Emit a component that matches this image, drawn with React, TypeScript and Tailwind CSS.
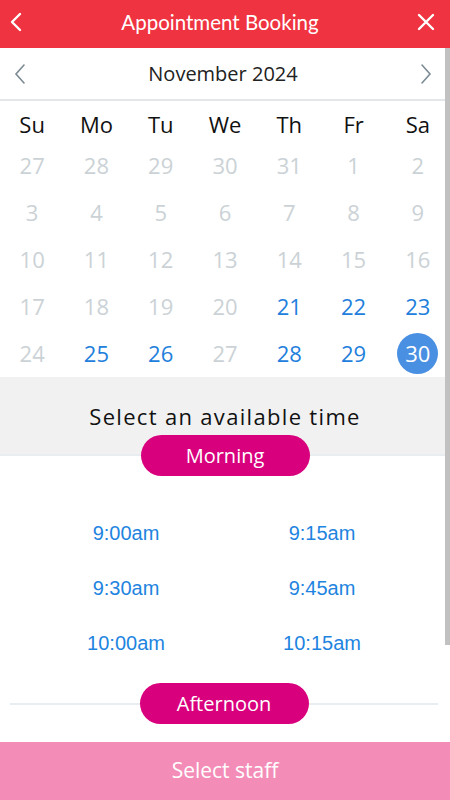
import React from 'react';

const weeks = [
  [27, 28, 29, 30, 31, 1, 2],
  [3, 4, 5, 6, 7, 8, 9],
  [10, 11, 12, 13, 14, 15, 16],
  [17, 18, 19, 20, 21, 22, 23],
  [24, 25, 26, 27, 28, 29, 30],
];

// which cells (week index, day index) are bookable
const available = new Set(['3-4', '3-5', '3-6', '4-1', '4-2', '4-4', '4-5', '4-6']);
const selected = '4-6';

const morning = ['9:00am', '9:15am', '9:30am', '9:45am', '10:00am', '10:15am'];

const Pill = ({ label }: { label: string }) => (
  <div className="w-[169px] h-[41px] rounded-full bg-[#d9007e] text-white text-[20px] flex items-center justify-center relative z-10">
    {label}
  </div>
);

const TimeGrid = ({ slots }: { slots: string[] }) => (
  <div className="grid grid-cols-2 pl-[28px] pr-[30px]">
    {slots.map(t => (
      <div
        key={t}
        className="h-[55px] flex items-center justify-center text-[20px] text-[#1e84e0]"
        style={{ fontFamily: '"Liberation Sans", Arial, sans-serif' }}
      >
        {t}
      </div>
    ))}
  </div>
);

export default function App() {
  return (
    <div className="w-[450px] h-[800px] flex flex-col bg-white" style={{ fontFamily: '"Open Sans", "Noto Sans", sans-serif' }}>
      {/* Header */}
      <div className="h-[48px] shrink-0 bg-[#ef3340] flex items-center justify-between px-[10px] text-white">
        <svg width="14" height="20" viewBox="0 0 14 20" fill="none" stroke="white" strokeWidth="2.4" strokeLinecap="round" strokeLinejoin="round" className="-mt-[4px]">
          <path d="M10 2 L2 10 L10 18" />
        </svg>
        <div className="text-[20.5px] pb-[3px]" style={{ fontFamily: 'Lato, "Open Sans", sans-serif' }}>Appointment Booking</div>
        <svg width="20" height="20" viewBox="0 0 20 20" fill="none" stroke="white" strokeWidth="2.4" strokeLinecap="round" className="mr-[4px] -mt-[4px]">
          <path d="M3 3 L17 17 M17 3 L3 17" />
        </svg>
      </div>

      {/* Scroll area */}
      <div className="flex-1 relative overflow-hidden">
        <div className="h-[53px] flex items-center justify-between px-[14px] border-b-2 border-[#e3e7ea]">
          <svg width="12" height="22" viewBox="0 0 12 22" fill="none" stroke="#7b8a93" strokeWidth="1.6" strokeLinecap="round">
            <path d="M10 2 L2 11 L10 20" />
          </svg>
          <div className="text-[20px] text-[#222]">November 2024</div>
          <svg width="12" height="22" viewBox="0 0 12 22" fill="none" stroke="#7b8a93" strokeWidth="1.6" strokeLinecap="round" className="mr-[4px]">
            <path d="M2 2 L10 11 L2 20" />
          </svg>
        </div>

        <div className="grid grid-cols-7 h-[41px] pt-[5px] text-[22px] text-[#111]">
          {['Su', 'Mo', 'Tu', 'We', 'Th', 'Fr', 'Sa'].map(d => (
            <div key={d} className="flex items-center justify-center">{d}</div>
          ))}
        </div>

        {weeks.map((week, wi) => (
          <div key={wi} className="grid grid-cols-7 h-[47px]">
            {week.map((day, di) => {
              const key = `${wi}-${di}`;
              const isSel = key === selected;
              const isAvail = available.has(key);
              return (
                <div key={key} className="flex items-center justify-center">
                  <div
                    className={`w-[41px] h-[41px] rounded-full flex items-center justify-center text-[22px] ${
                      isSel ? 'bg-[#4a90e2] text-white' : isAvail ? 'text-[#1e80dc]' : 'text-[#cbd2d6]'
                    }`}
                  >
                    {day}
                  </div>
                </div>
              );
            })}
          </div>
        ))}

        <div className="h-[79px] bg-[#f1f1f1] border-b-2 border-[#e9edf0] pt-[23px] text-center text-[22px] tracking-[0.06em] text-[#111]">
          Select an available time
        </div>
        <div className="flex justify-center -mt-[21px]">
          <Pill label="Morning" />
        </div>

        <div className="pt-[29px]">
          <TimeGrid slots={morning} />
        </div>

        <div className="flex items-center pl-[10px] pr-[12px] mt-[13px]">
          <div className="flex-1 h-[2px] bg-[#e9edf0]" />
          <Pill label="Afternoon" />
          <div className="flex-1 h-[2px] bg-[#e9edf0]" />
        </div>

        {/* scrollbar */}
        <div className="absolute right-0 top-0 w-[5px] h-[597px] bg-[#c1c1c1]" />
      </div>

      {/* Footer */}
      <div className="h-[58px] shrink-0 bg-[#f38db8] flex items-center justify-center text-white text-[21px]">
        Select staff
      </div>
    </div>
  );
}
